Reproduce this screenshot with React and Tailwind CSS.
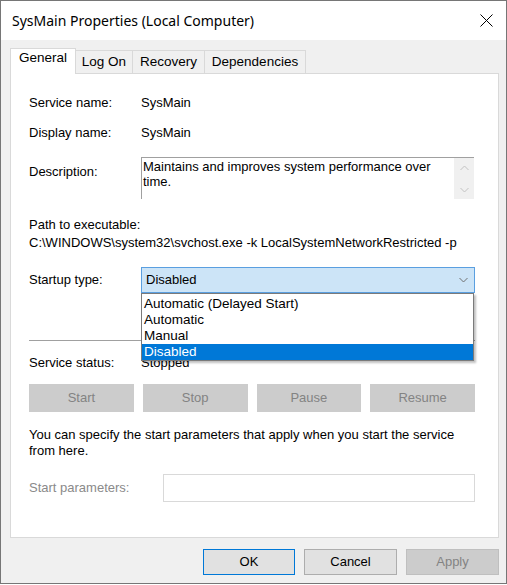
import React from 'react';

function ChevronUp({ color = '#c2c2c2' }) {
  return (
    <svg width="9" height="6" viewBox="0 0 9 6">
      <path d="M0.5 5 L4.5 1 L8.5 5" fill="none" stroke={color} strokeWidth="1" />
    </svg>
  );
}

function ChevronDown({ color = '#c2c2c2' }) {
  return (
    <svg width="9" height="6" viewBox="0 0 9 6">
      <path d="M0.5 1 L4.5 5 L8.5 1" fill="none" stroke={color} strokeWidth="1" />
    </svg>
  );
}

function Tabs() {
  const others = [
    { label: 'Log On', w: 'w-[57px]' },
    { label: 'Recovery', w: 'w-[72px]' },
    { label: 'Dependencies', w: 'w-[101px]' },
  ];
  return (
    <div className="flex h-[25px] items-end text-[13.5px]">
      <div className="relative z-10 -mb-px flex h-[26px] w-[66px] justify-center border border-b-0 border-[#d9d9d9] bg-white pt-[1px] leading-4">
        General
      </div>
      {others.map((t) => (
        <div
          key={t.label}
          className={`flex h-[23px] ${t.w} justify-center border-t border-r border-[#d9d9d9] bg-[#f0f0f0] pt-[3px] leading-4`}
        >
          {t.label}
        </div>
      ))}
    </div>
  );
}

function InfoRow({ label, value, className = '' }) {
  return (
    <div className={`flex h-4 leading-4 ${className}`}>
      <span className="w-[112px] shrink-0">{label}</span>
      <span>{value}</span>
    </div>
  );
}

function StartupCombo() {
  const options = ['Automatic (Delayed Start)', 'Automatic', 'Manual', 'Disabled'];
  return (
    <div className="mt-4 flex h-[26px] items-center">
      <span className="w-[112px] shrink-0">Startup type:</span>
      <div className="relative h-[26px] flex-1">
        <div className="flex h-full items-center justify-between border border-[#5a9fe0] bg-[#cce4f7] pl-[4px] pr-[6px]">
          <span className="leading-4">Disabled</span>
          <ChevronDown color="#707070" />
        </div>
        <div className="absolute left-0 top-[26px] z-20 h-[68px] w-[333px] border border-[#7a7a7a] bg-white pt-[2px] text-[13.5px] shadow-[2px_2px_2px_rgba(0,0,0,0.25)]">
          {options.map((o) => (
            <div
              key={o}
              className={`h-4 pl-[2px] leading-4 ${o === 'Disabled' ? 'bg-[#0078d7] text-white' : ''}`}
            >
              {o}
            </div>
          ))}
        </div>
      </div>
    </div>
  );
}

function GrayButton({ children }) {
  return (
    <div className="flex h-[28px] items-center justify-center bg-[#cccccc] text-[#838383]">{children}</div>
  );
}

function GeneralPanel() {
  return (
    <div className="flex h-[465px] flex-col border border-[#d9d9d9] bg-white pl-[18px] pr-[23px]">
      <InfoRow label="Service name:" value="SysMain" className="mt-[21px]" />
      <InfoRow label="Display name:" value="SysMain" className="mt-[14px]" />

      <div className="mt-4 flex h-[42px]">
        <span className="w-[112px] shrink-0 pt-[7px] leading-4">Description:</span>
        <div className="flex w-[333px] border-t border-l border-[#a0a0a0]">
          <div className="flex-1 pl-[1px] pt-[1px] leading-[15px]">
            Maintains and improves system performance over
            <br />
            time.
          </div>
          <div className="flex w-[20px] flex-col items-center justify-between bg-[#f0f0f0] pb-[6px] pt-[7px]">
            <ChevronUp />
            <ChevronDown />
          </div>
        </div>
      </div>

      <div className="mt-[18px] leading-4">Path to executable:</div>
      <div className="mt-[2px] leading-4">C:\WINDOWS\system32\svchost.exe -k LocalSystemNetworkRestricted -p</div>

      <StartupCombo />

      <div className="mt-[47px] h-px bg-[#a0a0a0]" />

      <InfoRow label="Service status:" value="Stopped" className="mt-[14px]" />

      <div className="mt-[13px] grid grid-cols-4 gap-[9px]">
        <GrayButton>Start</GrayButton>
        <GrayButton>Stop</GrayButton>
        <GrayButton>Pause</GrayButton>
        <GrayButton>Resume</GrayButton>
      </div>

      <p className="mt-[15px] leading-4">
        You can specify the start parameters that apply when you start the service
        <br />
        from here.
      </p>

      <div className="mt-[15px] flex h-[28px] items-center">
        <span className="w-[134px] shrink-0 text-[#8a8a8a]">Start parameters:</span>
        <div className="h-full flex-1 border border-[#d9d9d9] bg-white" />
      </div>
    </div>
  );
}

export default function App() {
  return (
    <div className="h-[585px] w-[507px] bg-white font-['Liberation_Sans',Arial,sans-serif] text-[13px] text-black">
      <div className="flex h-[584px] flex-col border border-[#767676]">
        <div className="flex h-[39px] shrink-0 items-center justify-between bg-white pl-[11px] pr-[13px]">
          <span className="font-['Noto_Sans',sans-serif] text-[14px]">SysMain Properties (Local Computer)</span>
          <svg width="13" height="13" viewBox="0 0 13 13">
            <path d="M0.5 0.5 L12.5 12.5 M12.5 0.5 L0.5 12.5" stroke="#000" strokeWidth="1" />
          </svg>
        </div>
        <div className="flex flex-1 flex-col bg-[#f0f0f0] pl-[9px] pr-[7px] pt-[8px]">
          <Tabs />
          <GeneralPanel />
          <div className="mt-[11px] flex justify-end gap-[9px]">
            <button className="h-[26px] w-[92px] border border-[#0078d7] bg-[#e1e1e1]">OK</button>
            <button className="h-[26px] w-[93px] border border-[#adadad] bg-[#e1e1e1]">Cancel</button>
            <button className="h-[26px] w-[93px] border border-[#bfbfbf] bg-[#cccccc] text-[#838383]">Apply</button>
          </div>
        </div>
      </div>
    </div>
  );
}
